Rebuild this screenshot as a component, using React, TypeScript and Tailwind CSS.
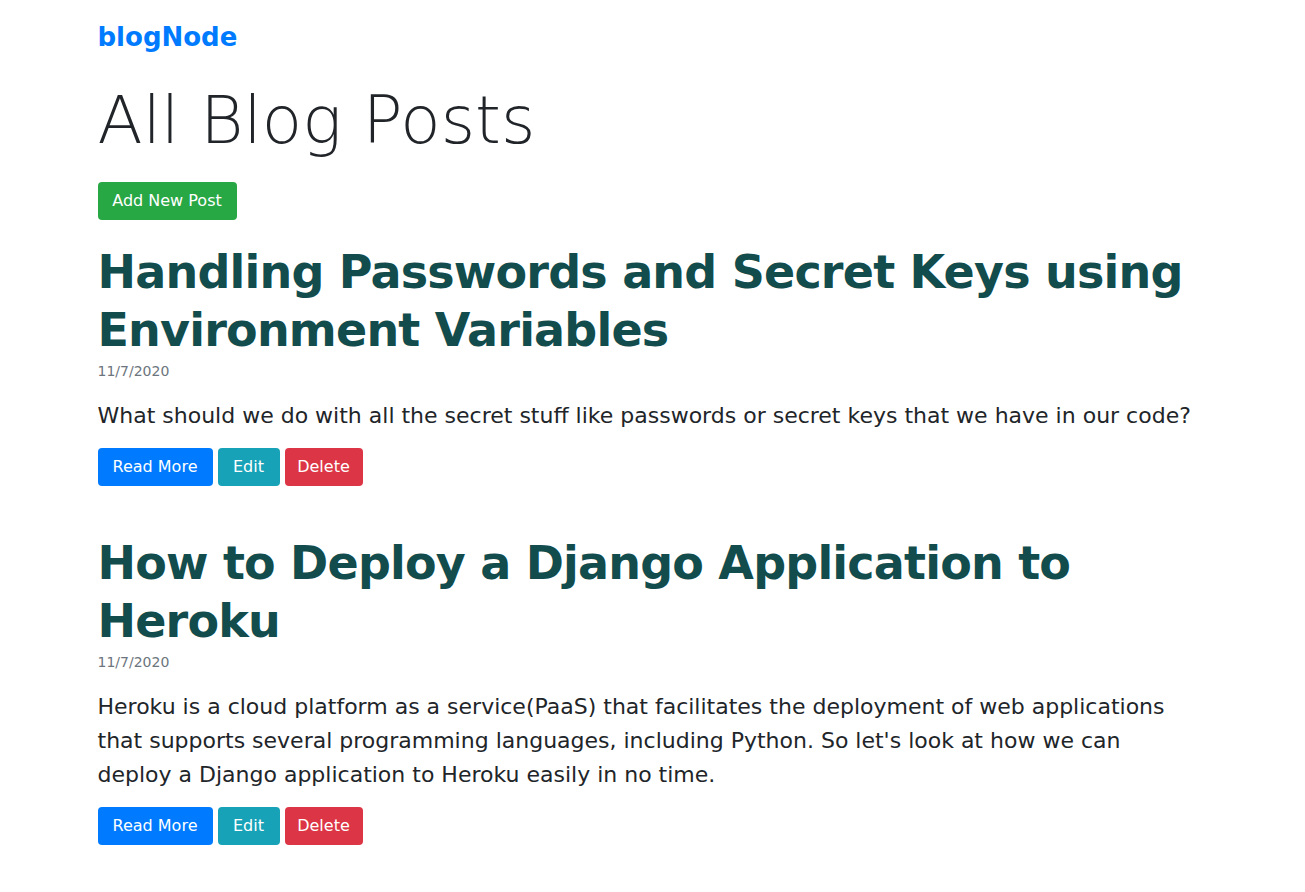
import React from "react";

const font = { fontFamily: '"DejaVu Sans", "Noto Sans", sans-serif' };

type Post = { title: string; date: string; body: string };

const posts: Post[] = [
  {
    title: "Handling Passwords and Secret Keys using Environment Variables",
    date: "11/7/2020",
    body: "What should we do with all the secret stuff like passwords or secret keys that we have in our code?",
  },
  {
    title: "How to Deploy a Django Application to Heroku",
    date: "11/7/2020",
    body: "Heroku is a cloud platform as a service(PaaS) that facilitates the deployment of web applications that supports several programming languages, including Python. So let's look at how we can deploy a Django application to Heroku easily in no time.",
  },
];

function PostItem({ post }: { post: Post }) {
  return (
    <article className="mb-[48px]">
      <h2 className="text-[46px] leading-[58px] font-bold tracking-[-0.8px] text-[#124c4c]">{post.title}</h2>
      <div className="text-[14px] leading-[20px] text-[#6c757d] mt-[2px]">{post.date}</div>
      <p className="max-w-[1100px] text-[22px] leading-[34px] text-[#212529] mt-[18px]">{post.body}</p>
      <div className="flex gap-[5px] mt-[15px]">
        <button className="w-[115px] h-[38px] rounded-[4px] bg-[#007bff] text-white text-[16px]">Read More</button>
        <button className="w-[62px] h-[38px] rounded-[4px] bg-[#17a2b8] text-white text-[16px]">Edit</button>
        <button className="w-[78px] h-[38px] rounded-[4px] bg-[#dc3545] text-white text-[16px]">Delete</button>
      </div>
    </article>
  );
}

export default function App() {
  return (
    <div className="min-h-screen bg-white" style={font}>
      <div className="mx-auto w-[1140px] px-[15px]">
        <nav className="pt-[17px]">
          <a className="text-[26px] leading-[40px] font-bold text-[#007bff]">blogNode</a>
        </nav>
        <h1 className="mt-[25px] text-[66px] leading-[77px] font-light text-[#212529]">All Blog Posts</h1>
        <div className="mt-[23px]">
          <button className="w-[139px] h-[38px] rounded-[4px] bg-[#28a745] text-white text-[16px]">Add New Post</button>
        </div>
        <div className="mt-[23px]">
          {posts.map((p) => (
            <PostItem key={p.title} post={p} />
          ))}
        </div>
      </div>
    </div>
  );
}
